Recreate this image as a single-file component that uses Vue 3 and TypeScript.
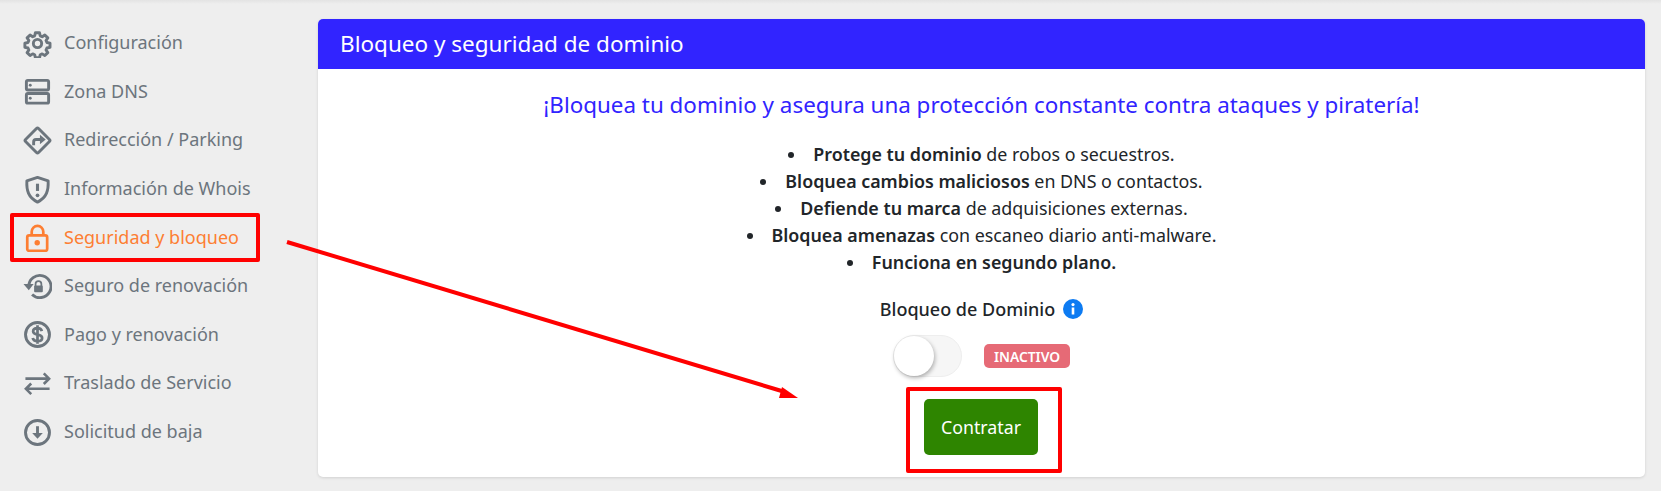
<script setup lang="ts">
const items = [
  { key: 'gear', label: 'Configuración' },
  { key: 'dns', label: 'Zona DNS' },
  { key: 'redir', label: 'Redirección / Parking' },
  { key: 'shield', label: 'Información de Whois' },
  { key: 'lock', label: 'Seguridad y bloqueo', active: true },
  { key: 'renew', label: 'Seguro de renovación' },
  { key: 'dollar', label: 'Pago y renovación' },
  { key: 'swap', label: 'Traslado de Servicio' },
  { key: 'down', label: 'Solicitud de baja' },
]
const bullets = [
  { b: 'Protege tu dominio', t: ' de robos o secuestros.' },
  { b: 'Bloquea cambios maliciosos', t: ' en DNS o contactos.' },
  { b: 'Defiende tu marca', t: ' de adquisiciones externas.' },
  { b: 'Bloquea amenazas', t: ' con escaneo diario anti-malware.' },
  { b: 'Funciona en segundo plano.', t: '' },
]
</script>

<template>
  <div class="page">
    <nav class="side">
      <a v-for="it in items" :key="it.key" class="item" :class="{ active: it.active }">
        <svg class="ico" viewBox="0 0 30 30" fill="none" stroke="currentColor">
          <template v-if="it.key === 'gear'">
            <path stroke-width="3.400" stroke-linejoin="round" d="M12.600 2.500h4.800l.8 3.600 2.300 1 3.100-2 3.400 3.400-2 3.100 1 2.300 3.600.8v4.800l-3.600.8-1 2.300 2 3.100-3.400 3.400-3.100-2-2.300 1-.8 3.600h-4.800l-.8-3.600-2.300-1-3.100 2-3.400-3.400 2-3.100-1-2.300-3.600-.8v-4.800l3.600-.8 1-2.300-2-3.100 3.400-3.400 3.100 2 2.300-1z" transform="translate(1.600 1.600) scale(.89)"/>
            <circle cx="15" cy="15" r="4.300" stroke-width="3"/>
          </template>
          <template v-else-if="it.key === 'dns'">
            <rect x="3.500" y="3.500" width="23" height="10" rx="1.500" stroke-width="3"/>
            <rect x="3.500" y="17" width="23" height="10" rx="1.500" stroke-width="3"/>
            <circle cx="7.500" cy="8.500" r="1.500" fill="currentColor" stroke="none"/>
            <circle cx="7.500" cy="22" r="1.500" fill="currentColor" stroke="none"/>
          </template>
          <template v-else-if="it.key === 'redir'">
            <rect x="5.500" y="5.500" width="19" height="19" rx="1.500" stroke-width="3" transform="rotate(45 15 15)"/>
            <path stroke-width="3" d="M11 20v-3.500a2.500 2.500 0 0 1 2.500-2.500H20"/>
            <path fill="currentColor" stroke="none" d="M17.500 9 23.500 14l-6 5z"/>
          </template>
          <template v-else-if="it.key === 'shield'">
            <path stroke-width="3" stroke-linejoin="round" d="M15 2.500 26 6c.5 10-1.500 17.500-11 22C5.500 23.500 3.500 16 4 6z"/>
            <path stroke-width="3.200" d="M15 9v7.500"/>
            <circle cx="15" cy="21" r="1.900" fill="currentColor" stroke="none"/>
          </template>
          <template v-else-if="it.key === 'lock'">
            <path stroke-width="2.800" d="M9 13V9a6 6 0 0 1 12 0v4"/>
            <rect x="4.400" y="12.800" width="20.600" height="16" rx="2" stroke-width="2.800"/>
            <circle cx="14.700" cy="20.500" r="2.800" fill="currentColor" stroke="none"/>
          </template>
          <template v-else-if="it.key === 'renew'">
            <path stroke-width="3" d="M6 15a11.500 11.500 0 1 1 3.400 8.200"/>
            <path fill="currentColor" stroke="none" d="M.500 12.500h10.500L6 19z"/>
            <rect x="11.500" y="14" width="9" height="7" rx="1" fill="currentColor" stroke="none"/>
            <path stroke-width="1.800" d="M13 14.500V12.500a3 3 0 0 1 6 0v2"/>
          </template>
          <template v-else-if="it.key === 'dollar'">
            <circle cx="15" cy="15" r="12.400" stroke-width="3"/>
            <path stroke-width="2.800" d="M19.500 11.500c-.500-2-2.200-3-4.500-3-2.600 0-4.500 1.300-4.500 3.300 0 4.700 9.300 2.100 9.300 6.700 0 2.200-2 3.400-4.800 3.400-2.600 0-4.500-1.200-5-3.300M15 5.500v19"/>
          </template>
          <template v-else-if="it.key === 'swap'">
            <path stroke-width="2.700" d="M2.500 10h24M21.500 4.500 27 10l-5.500 5.500"/>
            <path stroke-width="2.700" d="M27.500 20.500h-24M8.500 15 3 20.500 8.500 26"/>
          </template>
          <template v-else>
            <circle cx="15" cy="15" r="12.400" stroke-width="3"/>
            <path stroke-width="3" d="M15 8.500v9"/>
            <path fill="currentColor" stroke="none" d="M9.500 15.500h11L15 21.500z"/>
          </template>
        </svg>
        <span class="label">{{ it.label }}</span>
      </a>
    </nav>

    <main class="card">
      <header class="card-head">Bloqueo y seguridad de dominio</header>
      <div class="card-body">
        <h2 class="lead">¡Bloquea tu dominio y asegura una protección constante contra ataques y piratería!</h2>
        <ul class="list">
          <li v-for="b in bullets" :key="b.b"><strong>{{ b.b }}</strong>{{ b.t }}</li>
        </ul>
        <div class="lock-title">
          <span>Bloqueo de Dominio</span>
          <svg class="info" viewBox="0 0 20 20">
            <circle cx="10" cy="10" r="10" fill="#0d7bf2"/>
            <rect x="8.700" y="8.500" width="2.600" height="7" fill="#fff"/>
            <circle cx="10" cy="5.600" r="1.600" fill="#fff"/>
          </svg>
        </div>
        <div class="toggle-row">
          <span class="toggle"><span class="knob"></span></span>
          <span class="badge">INACTIVO</span>
        </div>
        <button class="cta" type="button">Contratar</button>
      </div>
    </main>

    <div class="mark mark-side"></div>
    <div class="mark mark-cta"></div>
    <svg class="arrow" viewBox="0 0 1661 491">
      <path d="M287 242 785 392" stroke="#f00" stroke-width="4" fill="none"/>
      <path d="M798 398 779 398 782 387z" fill="#f00"/>
    </svg>
  </div>
</template>

<style>
html, body { margin: 0; background: #eeeeee; }
</style>

<style scoped>
.page {
  position: relative;
  width: 1661px;
  height: 491px;
  box-sizing: border-box;
  padding: 19px 16px 14px 0;
  display: flex;
  overflow: hidden;
  background: #eeeeee;
  font-family: "Noto Sans", "Open Sans", sans-serif;
  color: #212529;
}
.page::before {
  content: "";
  position: absolute;
  left: 0;
  right: 0;
  top: 0;
  height: 4px;
  background: linear-gradient(#e3e3e3, #eeeeee);
}
.side {
  width: 318px;
  flex: none;
  display: flex;
  flex-direction: column;
}
.item {
  height: 48.600px;
  display: flex;
  align-items: center;
  gap: 12px;
  padding-left: 23px;
  font-size: 18px;
  color: #6c757d;
}
.label { margin-top: -2px; }
.item.active { color: #fd7e32; }
.ico { width: 29px; height: 29px; flex: none; }
.card {
  flex: 1;
  background: #fff;
  border-radius: 5px;
  overflow: hidden;
  box-shadow: 0 1px 3px rgba(0, 0, 0, .12);
  display: flex;
  flex-direction: column;
}
.card-head {
  height: 50px;
  box-sizing: border-box;
  padding: 0 0 2px 22px;
  flex: none;
  display: flex;
  align-items: center;
  background: #3124ff;
  color: #fff;
  font-size: 22.500px;
}
.card-body {
  flex: 1;
  display: flex;
  flex-direction: column;
  align-items: center;
}
.lead {
  margin: 21px 0 0;
  font-size: 22.400px;
  line-height: 30px;
  font-weight: 400;
  color: #3124ff;
}
.list {
  margin: 21px 0 0;
  padding: 0;
  list-style-position: inside;
  text-align: center;
  font-size: 17.850px;
  line-height: 27px;
}
.list strong { font-weight: 600; }
.lock-title {
  margin-top: 21px;
  display: flex;
  align-items: center;
  gap: 8px;
  font-size: 18px;
  font-weight: 500;
  line-height: 24px;
}
.info { width: 20px; height: 20px; }
.toggle-row {
  margin-top: 14px;
  display: flex;
  align-items: center;
  gap: 22px;
}
.toggle {
  width: 69px;
  height: 42px;
  box-sizing: border-box;
  border: 1px solid #eeeeee;
  border-radius: 21px;
  background: #f6f6f6;
  display: block;
}
.knob {
  display: block;
  width: 40px;
  height: 40px;
  border-radius: 50%;
  background: #fff;
  box-shadow: 1px 2px 4px rgba(0, 0, 0, .3);
}
.badge {
  width: 86px;
  height: 24px;
  display: flex;
  align-items: center;
  justify-content: center;
  border-radius: 5px;
  background: #e66a76;
  color: #fff;
  font-size: 13.800px;
  font-weight: 600;
}
.cta {
  margin: 22px 1px 0 0;
  width: 114px;
  height: 56px;
  border: none;
  border-radius: 5px;
  background: #2e8500;
  color: #fff;
  font-family: inherit;
  font-size: 17.800px;
}
.mark {
  position: absolute;
  box-sizing: border-box;
  border: 4px solid #f00;
  border-radius: 2px;
}
.mark-side { left: 10px; top: 213px; width: 250px; height: 49px; }
.mark-cta { left: 906px; top: 387px; width: 156px; height: 86px; }
.arrow {
  position: absolute;
  left: 0;
  top: 0;
  width: 1661px;
  height: 491px;
  pointer-events: none;
}
</style>
